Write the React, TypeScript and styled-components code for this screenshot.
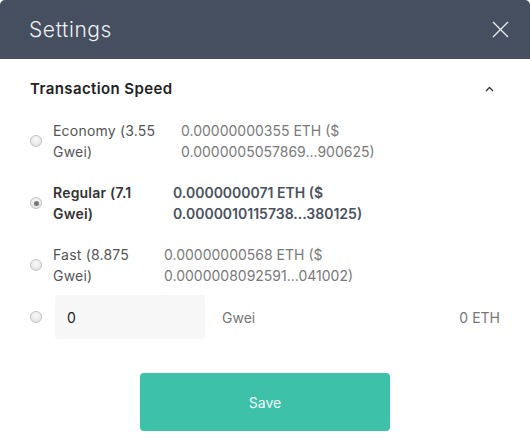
import React from 'react';
import styled, { createGlobalStyle } from 'styled-components';

const GlobalStyle = createGlobalStyle`
  html, body {
    margin: 0;
    padding: 0;
    background: #ffffff;
  }
  body {
    font-family: Inter, "Open Sans", "DejaVu Sans", sans-serif;
  }
`;

const speeds = [
  { name: 'Economy', gwei: '3.55', eth: '0.00000000355 ETH ($', usd: '0.0000005057869...900625)', labelWidth: 128, selected: false },
  { name: 'Regular', gwei: '7.1', eth: '0.0000000071 ETH ($', usd: '0.0000010115738...380125)', labelWidth: 120, selected: true },
  { name: 'Fast', gwei: '8.875', eth: '0.00000000568 ETH ($', usd: '0.0000008092591...041002)', labelWidth: 111, selected: false },
];

function App() {
  return (
    <Modal>
      <GlobalStyle />
      <Header>
        <Title>Settings</Title>
        <CloseButton aria-label="close">
          <svg width="17" height="17" viewBox="0 0 17 17">
            <path d="M1 1 L16 16 M16 1 L1 16" stroke="#e6e9ee" strokeWidth="1.4" fill="none" />
          </svg>
        </CloseButton>
      </Header>
      <Body>
        <SectionHead>
          <SectionTitle>Transaction Speed</SectionTitle>
          <svg width="9" height="6" viewBox="0 0 9 6">
            <path d="M1 5 L4.5 1.5 L8 5" stroke="#333" strokeWidth="1.3" fill="none" />
          </svg>
        </SectionHead>
        <OptionList>
          {speeds.map((s) => (
            <Option key={s.name}>
              <Radio $checked={s.selected} />
              <Label $width={s.labelWidth} $bold={s.selected}>
                {s.name} ({s.gwei}
                <br />
                Gwei)
              </Label>
              <Value $bold={s.selected}>
                {s.eth}
                <br />
                {s.usd}
              </Value>
            </Option>
          ))}
        </OptionList>
        <CustomRow>
          <Radio $checked={false} />
          <GweiInput defaultValue="0" />
          <Unit>Gwei</Unit>
          <Total>0 ETH</Total>
        </CustomRow>
        <SaveButton>Save</SaveButton>
      </Body>
    </Modal>
  );
}

const Modal = styled.div`
  width: 530px;
  height: 448px;
  background: #fff;
  overflow: hidden;
`;

const Header = styled.div`
  height: 59px;
  background: #454f5f;
  border-radius: 5px 5px 0 0;
  display: flex;
  align-items: center;
  justify-content: space-between;
  padding: 0 21px 0 29px;
`;

const Title = styled.h1`
  margin: 0;
  font-size: 21px;
  font-weight: 300;
  color: #eef0f3;
  letter-spacing: 0.6px;
`;

const CloseButton = styled.button`
  border: 0;
  background: none;
  padding: 0;
  display: flex;
  cursor: pointer;
`;

const Body = styled.div`
  padding: 0 30px;
  display: flex;
  flex-direction: column;
`;

const SectionHead = styled.div`
  display: flex;
  align-items: center;
  justify-content: space-between;
  padding: 20px 6px 0 0;
  height: 20px;
`;

const SectionTitle = styled.h2`
  margin: 0;
  font-size: 15px;
  font-weight: 600;
  color: #222;
  line-height: 20px;
  letter-spacing: 0.4px;
`;

const OptionList = styled.div`
  display: flex;
  flex-direction: column;
  gap: 20px;
  margin-top: 21px;
`;

const Option = styled.div`
  display: flex;
  align-items: center;
`;

const Radio = styled.span<{ $checked: boolean }>`
  flex: none;
  width: 10px;
  height: 10px;
  border-radius: 50%;
  border: 1px solid #c4c4c4;
  background: radial-gradient(circle at 50% 35%, #fafafa 0%, #dcdcdc 100%);
  margin-right: 11px;
  position: relative;
  &::after {
    content: '';
    display: ${(p) => (p.$checked ? 'block' : 'none')};
    position: absolute;
    left: 2.5px;
    top: 2.5px;
    width: 5px;
    height: 5px;
    border-radius: 50%;
    background: #777;
  }
`;

const Label = styled.div<{ $width: number; $bold: boolean }>`
  flex: none;
  width: ${(p) => p.$width}px;
  font-size: 14px;
  line-height: 21px;
  font-weight: ${(p) => (p.$bold ? 600 : 400)};
  color: ${(p) => (p.$bold ? '#333' : '#555')};
  letter-spacing: 0.2px;
`;

const Value = styled.div<{ $bold: boolean }>`
  font-size: 14px;
  line-height: 21px;
  font-weight: ${(p) => (p.$bold ? 600 : 400)};
  color: ${(p) => (p.$bold ? '#4a5260' : '#7a7a7a')};
`;

const CustomRow = styled.div`
  display: flex;
  align-items: center;
  margin-top: 9px;
`;

const GweiInput = styled.input`
  width: 150px;
  height: 44px;
  box-sizing: border-box;
  border: 0;
  border-radius: 3px;
  background: #f7f7f7;
  padding: 0 12px;
  margin-left: 2px;
  font-family: inherit;
  font-size: 14px;
  color: #222;
  outline: none;
`;

const Unit = styled.span`
  margin-left: 17px;
  font-size: 14px;
  color: #777;
`;

const Total = styled.span`
  margin-left: auto;
  font-size: 14px;
  color: #777;
`;

const SaveButton = styled.button`
  align-self: center;
  margin-top: 34px;
  width: 250px;
  height: 58px;
  border: 0;
  border-radius: 4px;
  background: #3dc1a9;
  color: #f4fbf9;
  font-family: inherit;
  font-size: 14px;
  cursor: pointer;
`;

export default App;
